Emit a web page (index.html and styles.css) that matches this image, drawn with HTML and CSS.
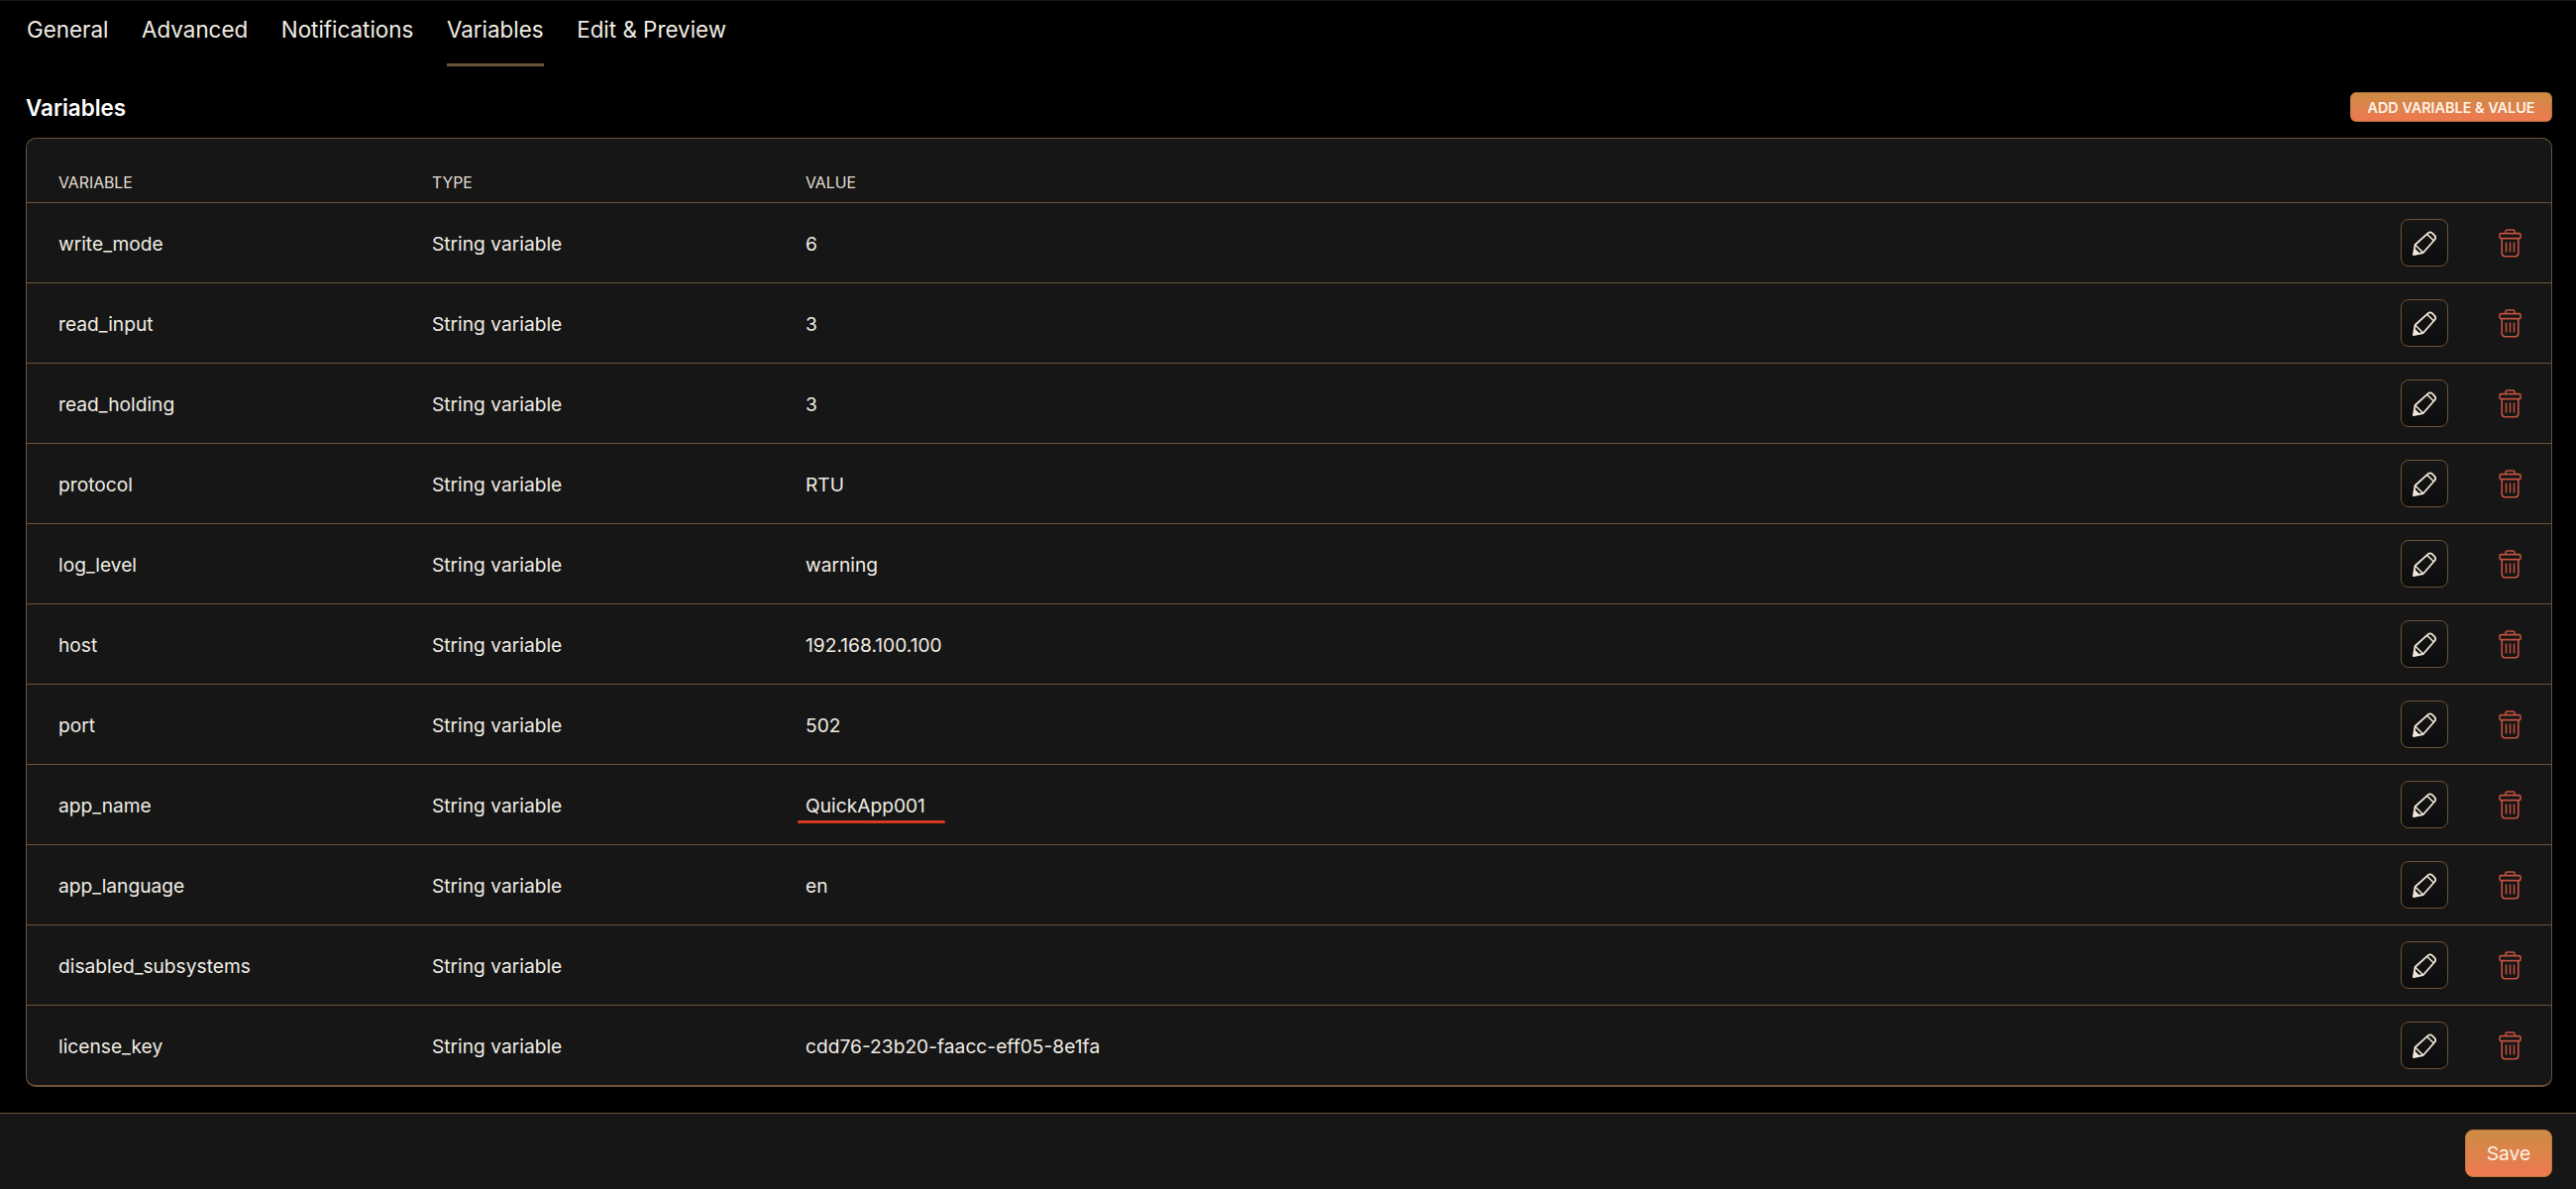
FILE: index.html
```html
<!DOCTYPE html>
<html lang="en">
<head>
<meta charset="utf-8">
<title>Variables</title>
<link rel="stylesheet" href="styles.css">
</head>
<body>
<svg class="sprites" width="0" height="0" aria-hidden="true">
  <symbol id="pencil" viewBox="0 0 24 25">
    <path d="M1 24 L2.6 14 L15.5 2.4 Q17.8 .4 20 2.4 L22.2 4.6 Q24.2 6.8 22.2 9 L10.8 22 Z" fill="none" stroke="currentColor" stroke-width="1.8" stroke-linejoin="round"/>
    <path d="M14.6 3.2 L21.6 10 M2.6 14 L10.8 22" fill="none" stroke="currentColor" stroke-width="1.6"/>
    <path d="M1 24 L2.2 18 L7 22.8 Z" fill="currentColor" stroke="currentColor" stroke-width="1" stroke-linejoin="round"/>
  </symbol>
  <symbol id="trash" viewBox="0 0 23 29">
    <path d="M7 5 V2.6 Q7 1 8.6 1 H14.4 Q16 1 16 2.6 V5" fill="none" stroke="currentColor" stroke-width="1.6"/>
    <rect x="1" y="4.6" width="21" height="5" rx="1.4" fill="none" stroke="currentColor" stroke-width="1.6"/>
    <path d="M3.2 9.6 V24.6 Q3.2 27.8 6.4 27.8 H16.6 Q19.8 27.8 19.8 24.6 V9.6" fill="none" stroke="currentColor" stroke-width="1.6"/>
    <path d="M7.5 13.5 V23.5 M11.5 13.5 V23.5 M15.5 13.5 V23.5" fill="none" stroke="currentColor" stroke-width="1.5"/>
  </symbol>
</svg>
<main class="content">
  <nav class="tabs">
    <a class="tab">General</a>
    <a class="tab">Advanced</a>
    <a class="tab">Notifications</a>
    <a class="tab tab-active">Variables</a>
    <a class="tab">Edit &amp; Preview</a>
  </nav>
  <div class="section-head">
    <h2 class="section-title">Variables</h2>
    <button class="btn-add">ADD VARIABLE &amp; VALUE</button>
  </div>
  <div class="card">
    <table class="vars">
      <colgroup><col class="col-a"><col class="col-a"><col><col class="col-actions"></colgroup>
      <thead>
        <tr><th>VARIABLE</th><th>TYPE</th><th>VALUE</th><th></th></tr>
      </thead>
      <tbody>
        <tr><td>write_mode</td><td>String variable</td><td>6</td><td><div class="actions"><button class="btn-edit"><svg class="ico-pencil"><use href="#pencil"/></svg></button><button class="btn-del"><svg class="ico-trash"><use href="#trash"/></svg></button></div></td></tr>
        <tr><td>read_input</td><td>String variable</td><td>3</td><td><div class="actions"><button class="btn-edit"><svg class="ico-pencil"><use href="#pencil"/></svg></button><button class="btn-del"><svg class="ico-trash"><use href="#trash"/></svg></button></div></td></tr>
        <tr><td>read_holding</td><td>String variable</td><td>3</td><td><div class="actions"><button class="btn-edit"><svg class="ico-pencil"><use href="#pencil"/></svg></button><button class="btn-del"><svg class="ico-trash"><use href="#trash"/></svg></button></div></td></tr>
        <tr><td>protocol</td><td>String variable</td><td>RTU</td><td><div class="actions"><button class="btn-edit"><svg class="ico-pencil"><use href="#pencil"/></svg></button><button class="btn-del"><svg class="ico-trash"><use href="#trash"/></svg></button></div></td></tr>
        <tr><td>log_level</td><td>String variable</td><td>warning</td><td><div class="actions"><button class="btn-edit"><svg class="ico-pencil"><use href="#pencil"/></svg></button><button class="btn-del"><svg class="ico-trash"><use href="#trash"/></svg></button></div></td></tr>
        <tr><td>host</td><td>String variable</td><td>192.168.100.100</td><td><div class="actions"><button class="btn-edit"><svg class="ico-pencil"><use href="#pencil"/></svg></button><button class="btn-del"><svg class="ico-trash"><use href="#trash"/></svg></button></div></td></tr>
        <tr><td>port</td><td>String variable</td><td>502</td><td><div class="actions"><button class="btn-edit"><svg class="ico-pencil"><use href="#pencil"/></svg></button><button class="btn-del"><svg class="ico-trash"><use href="#trash"/></svg></button></div></td></tr>
        <tr><td>app_name</td><td>String variable</td><td><span class="marked">QuickApp001</span></td><td><div class="actions"><button class="btn-edit"><svg class="ico-pencil"><use href="#pencil"/></svg></button><button class="btn-del"><svg class="ico-trash"><use href="#trash"/></svg></button></div></td></tr>
        <tr><td>app_language</td><td>String variable</td><td>en</td><td><div class="actions"><button class="btn-edit"><svg class="ico-pencil"><use href="#pencil"/></svg></button><button class="btn-del"><svg class="ico-trash"><use href="#trash"/></svg></button></div></td></tr>
        <tr><td>disabled_subsystems</td><td>String variable</td><td></td><td><div class="actions"><button class="btn-edit"><svg class="ico-pencil"><use href="#pencil"/></svg></button><button class="btn-del"><svg class="ico-trash"><use href="#trash"/></svg></button></div></td></tr>
        <tr><td>license_key</td><td>String variable</td><td>cdd76-23b20-faacc-eff05-8e1fa</td><td><div class="actions"><button class="btn-edit"><svg class="ico-pencil"><use href="#pencil"/></svg></button><button class="btn-del"><svg class="ico-trash"><use href="#trash"/></svg></button></div></td></tr>
      </tbody>
    </table>
  </div>
</main>
<footer class="footer">
  <button class="btn-save">Save</button>
</footer>
</body>
</html>
```
FILE: styles.css
```css
* { box-sizing: border-box; }
html, body { margin: 0; padding: 0; }
body {
  height: 100vh;
  overflow: hidden;
  display: flex;
  flex-direction: column;
  background: #000;
  color: #f0ece4;
  font-family: Inter, "Liberation Sans", sans-serif;
  border-top: 1px solid #161616;
}
.sprites { position: absolute; }
.content { flex: 1; padding: 0 24px 0 26px; }

.tabs { display: flex; gap: 33.6px; height: 66px; padding-left: 1px; }
.tab {
  font-size: 22.4px;
  line-height: 27px;
  padding-top: 15px;
  color: #f0ece4;
  border-bottom: 3px solid transparent;
  height: 66px;
}
.tab-active { border-bottom-color: #6b5238; }

.section-head {
  display: flex;
  justify-content: space-between;
  align-items: center;
  margin: 26px 0 16px;
  height: 30px;
}
.section-title { margin: 0; font-size: 22.4px; font-weight: 600; color: #fff; }
.btn-add {
  width: 204px;
  height: 30px;
  padding: 0;
  border: 1px solid #b0713a;
  border-radius: 6px;
  background: linear-gradient(#cc8c45, #ef7850);
  color: #fdf3e8;
  font: 600 14.4px Inter, sans-serif;
}

.card {
  border: 1px solid #6b5238;
  border-bottom-width: 2px;
  border-radius: 10px;
  background: #161616;
  overflow: hidden;
}
.vars { width: 100%; border-collapse: separate; border-spacing: 0; table-layout: fixed; }
.col-a { width: 377px; }
.col-actions { width: 200px; }
.vars th {
  height: 65px;
  padding: 0 0 9px 32px;
  vertical-align: bottom;
  text-align: left;
  font-size: 15.8px;
  font-weight: 400;
  line-height: 20px;
  color: #e4dfd4;
  border-bottom: 1px solid #6b5238;
}
.vars td {
  height: 81px;
  padding: 2px 0 0 32px;
  font-size: 19.2px;
  color: #f0ece4;
  border-bottom: 1px solid #6b5238;
}
.vars td:last-child { padding-top: 0; }
.vars tr:last-child td { border-bottom: 0; height: 80px; }

.actions { display: flex; justify-content: flex-end; align-items: center; gap: 51px; padding-right: 30px; }
.btn-edit {
  width: 48px;
  height: 48px;
  padding: 0;
  display: flex;
  align-items: center;
  justify-content: center;
  background: linear-gradient(#161616, #0c0c0c);
  border: 1px solid #6b5238;
  border-radius: 8px;
  color: #f0e8da;
}
.btn-del {
  width: 23px;
  height: 29px;
  padding: 0;
  display: flex;
  background: none;
  border: 0;
  color: #c4523f;
}
.ico-pencil { width: 24px; height: 25px; }
.ico-trash { width: 23px; height: 29px; }

.marked { position: relative; display: inline-block; }
.marked::after {
  content: "";
  position: absolute;
  left: -8px;
  width: 149px;
  bottom: -6px;
  height: 3px;
  border-radius: 2px;
  background: #d9381e;
}

.footer {
  height: 77px;
  flex: none;
  display: flex;
  justify-content: flex-end;
  padding: 16px 24px 12px 0;
  background: #161616;
  border-top: 1px solid #6b5238;
}
.btn-save {
  width: 88px;
  height: 48px;
  padding: 0;
  border: 1px solid #c0763a;
  border-radius: 8px;
  background: linear-gradient(#cc8c45, #ef7850);
  color: #fdf3e8;
  font: 400 19.2px Inter, sans-serif;
}
```
